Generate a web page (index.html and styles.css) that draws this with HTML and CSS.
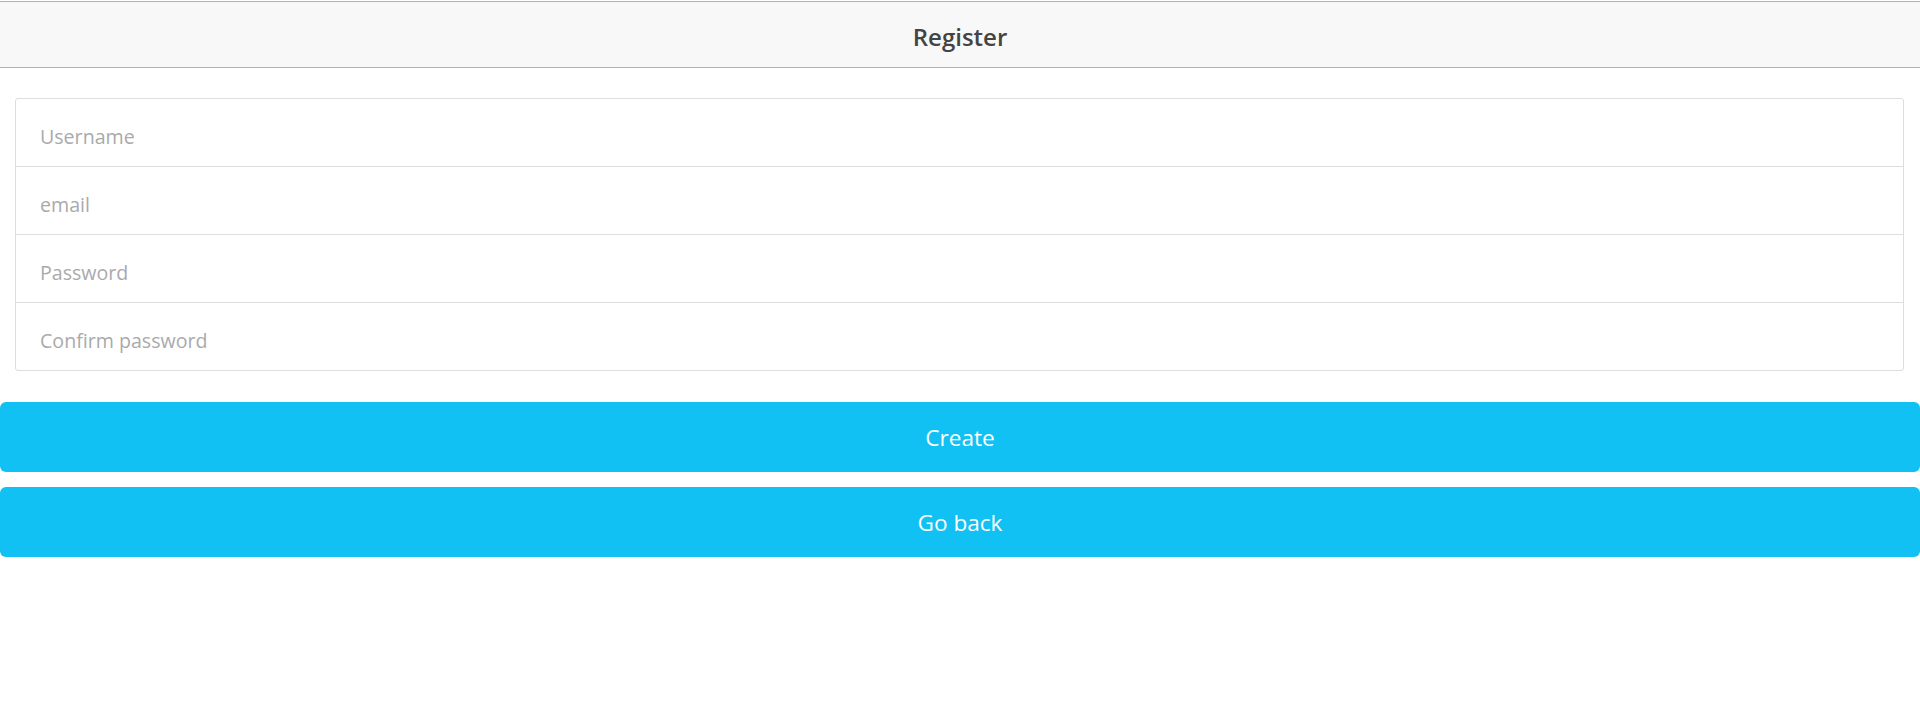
FILE: index.html
```html
<!DOCTYPE html>
<html lang="en">
<head>
<meta charset="utf-8">
<title>Register</title>
<link rel="stylesheet" href="styles.css">
</head>
<body>
<header class="bar">
  <h1 class="title">Register</h1>
</header>
<main class="content">
  <form class="form">
    <div class="list">
      <label class="item"><input class="field" type="text" placeholder="Username"></label>
      <label class="item"><input class="field" type="email" placeholder="email"></label>
      <label class="item"><input class="field" type="password" placeholder="Password"></label>
      <label class="item"><input class="field" type="password" placeholder="Confirm password"></label>
    </div>
    <div class="actions">
      <button class="btn" type="button">Create</button>
      <button class="btn" type="button">Go back</button>
    </div>
  </form>
</main>
</body>
</html>
```

FILE: styles.css
```css
* { box-sizing: border-box; }
html, body {
  margin: 0;
  padding: 0;
  background: #fff;
  font-family: "Open Sans", "Noto Sans", "Liberation Sans", sans-serif;
  color: #444;
}
.bar {
  margin-top: 1px;
  height: 67px;
  background: #f8f8f8;
  border-top: 1px solid #b2b2b2;
  border-bottom: 1px solid #b2b2b2;
  display: flex;
  align-items: center;
  justify-content: center;
}
.title {
  margin: 0;
  padding-top: 4px;
  font-size: 24px;
  font-weight: 600;
  color: #444;
}
.content {
  padding-top: 30px;
}
.form {
  display: flex;
  flex-direction: column;
}
.list {
  margin: 0 16px 31px 15px;
  border: 1px solid #ddd;
  border-radius: 3px;
  display: flex;
  flex-direction: column;
}
.item {
  height: 68px;
  display: flex;
  align-items: center;
  padding: 8px 0 0 24px;
  border-bottom: 1px solid #ddd;
}
.item:last-child {
  height: 67px;
  border-bottom: none;
}
.field {
  flex: 1;
  border: none;
  outline: none;
  background: transparent;
  font-family: inherit;
  font-size: 19.6px;
  color: #444;
  padding: 0;
}
.field::placeholder {
  color: #aaa;
}
.actions {
  display: flex;
  flex-direction: column;
  gap: 15px;
}
.btn {
  height: 70px;
  width: 100%;
  border: none;
  border-radius: 6px;
  background: #11c1f3;
  color: #fff;
  font-family: inherit;
  font-size: 22.6px;
  cursor: pointer;
}
```
